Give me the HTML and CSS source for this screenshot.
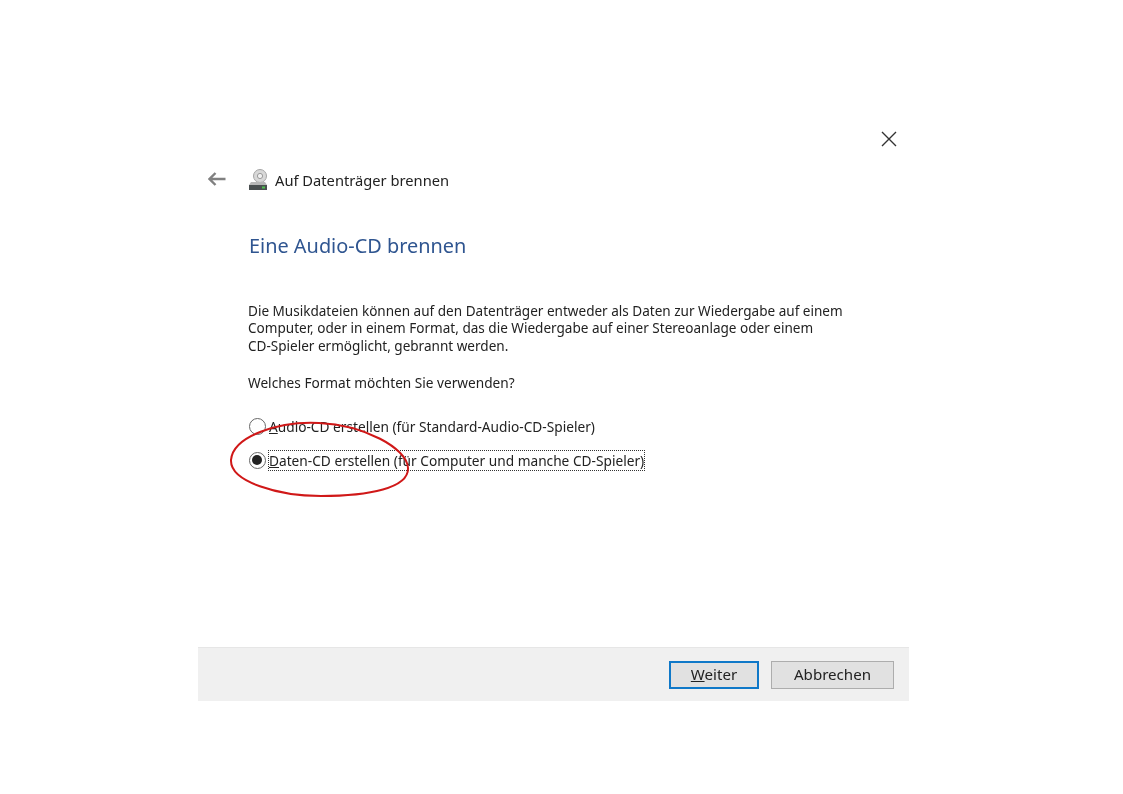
FILE: index.html
```html
<!DOCTYPE html>
<html lang="de">
<head>
  <meta charset="UTF-8">
  <meta name="viewport" content="width=device-width, initial-scale=1.0">
  <title>Auf Datenträger brennen</title>
  <link rel="stylesheet" href="styles.css">
</head>
<body>
  <div class="dialog">
    <div class="close-row">
      <svg class="close-icon" width="16" height="16" viewBox="0 0 16 16"><path d="M1 1 L15 15 M15 1 L1 15" stroke="#333" stroke-width="1.4" fill="none"/></svg>
    </div>
    <div class="title-row">
      <svg class="back-icon" width="18" height="14" viewBox="0 0 18 14"><path d="M1.5 7 H17.5 M7.5 1 L1.5 7 L7.5 13" stroke="#808080" stroke-width="2.4" fill="none"/></svg>
      <svg class="disc-icon" width="20" height="22" viewBox="0 0 20 22">
        <circle cx="12" cy="7" r="6.5" fill="#d8d8d8" stroke="#a5a5a5"/>
        <circle cx="12" cy="7" r="2.6" fill="#f2f2f2" stroke="#9a9a9a"/>
        <path d="M3 13 H17 L19 16 H1 Z" fill="#b8b8b8"/>
        <rect x="1" y="16" width="18" height="5" fill="#4a4f50"/>
        <rect x="14" y="17.5" width="3" height="2" fill="#4fc04f"/>
      </svg>
      <span class="title-text">Auf Datenträger brennen</span>
    </div>
    <div class="content">
      <h1 class="heading">Eine Audio-CD brennen</h1>
      <p class="intro">Die Musikdateien können auf den Datenträger entweder als Daten zur Wiedergabe auf einem<br>Computer, oder in einem Format, das die Wiedergabe auf einer Stereoanlage oder einem<br>CD-Spieler ermöglicht, gebrannt werden.</p>
      <p class="question">Welches Format möchten Sie verwenden?</p>
      <div class="options">
        <div class="option">
          <span class="radio"></span>
          <span class="option-label"><u>A</u>udio-CD erstellen (für Standard-Audio-CD-Spieler)</span>
        </div>
        <div class="option">
          <span class="radio radio-on"></span>
          <span class="option-label option-focus"><u>D</u>aten-CD erstellen (für Computer und manche CD-Spieler)</span>
        </div>
        <svg class="annotation" width="182" height="82" viewBox="0 0 182 82"><path d="M90 5 C50 3 4 18 2 42 C1 64 50 78 92 78 C140 78 180 70 179 50 C178 30 135 7 90 5 Z" fill="none" stroke="#d01818" stroke-width="2"/></svg>
      </div>
    </div>
    <div class="footer">
      <button class="btn btn-default" type="button"><u>W</u>eiter</button>
      <button class="btn" type="button">Abbrechen</button>
    </div>
  </div>
</body>
</html>
```

FILE: styles.css
```css
body {
  margin: 0;
  background: #fff;
  font-family: "Noto Sans", "Open Sans", sans-serif;
  color: #222;
}

.dialog {
  width: 711px;
  height: 701px;
  margin-left: 198px;
  display: flex;
  flex-direction: column;
  filter: blur(0.35px);
}

.close-row {
  display: flex;
  justify-content: flex-end;
  padding: 131px 12px 0 0;
  height: 29px;
}

.title-row {
  display: flex;
  align-items: center;
  height: 40px;
  padding-left: 10px;
}

.back-icon {
  margin-right: 22px;
  margin-bottom: 2px;
}

.disc-icon {
  margin-right: 7px;
  margin-bottom: 1px;
}

.title-text {
  font-size: 14.7px;
  color: #222;
}

.content {
  flex: 1;
  padding-left: 50px;
}

.heading {
  margin: 33px 0 0 1px;
  font-size: 19.9px;
  font-weight: 400;
  line-height: 26px;
  color: #2f5590;
}

.intro {
  margin: 44px 0 0;
  font-size: 13.55px;
  line-height: 17.3px;
}

.question {
  margin: 19px 0 0;
  font-size: 13.65px;
  line-height: 18px;
}

.options {
  position: relative;
  margin: 18px 0 0 1px;
}

.option {
  display: flex;
  align-items: center;
  height: 34px;
  font-size: 13.7px;
}

.option-label {
  line-height: 19px;
}

.radio {
  width: 17px;
  height: 17px;
  box-sizing: border-box;
  border: 1.5px solid #666;
  border-radius: 50%;
  margin-right: 3px;
  flex: none;
}

.radio-on {
  position: relative;
}

.radio-on::after {
  content: "";
  position: absolute;
  left: 2px;
  top: 2px;
  width: 10px;
  height: 10px;
  border-radius: 50%;
  background: #222;
}

.option-focus {
  outline: 1px dotted #333;
}

.annotation {
  position: absolute;
  left: -20px;
  top: 8px;
}

.footer {
  height: 54px;
  display: flex;
  align-items: center;
  justify-content: flex-end;
  gap: 12px;
  padding-right: 15px;
  background: #f0f0f0;
  border-top: 1px solid #e6e6e6;
  box-sizing: border-box;
}

.btn {
  width: 123px;
  height: 28px;
  padding: 0 0 2px;
  font-family: inherit;
  font-size: 15.1px;
  color: #222;
  background: #e1e1e1;
  border: 1px solid #adadad;
}

.btn-default {
  width: 90px;
  border: 2px solid #0f78c8;
}
```
